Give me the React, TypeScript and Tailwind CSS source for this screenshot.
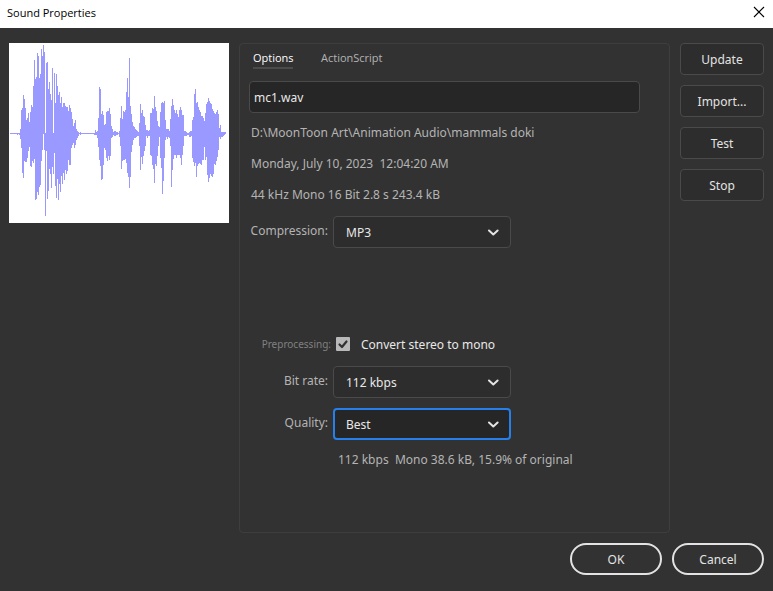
import { useState } from "react";
import type { ReactNode } from "react";

// Peak envelope of the clip, one [top, bottom] pair per column, silence at 279/282.
const LEAD_IN: number[][] = [
  [279, 282], [279, 282], [279, 282], [279, 282], [279, 282], [279, 282], [279, 282], [279, 285], [279, 282], [279, 285],
];
const PAUSE: number[][] = Array.from({ length: 13 }, () => [279, 282]);

const PEAKS: number[][] = [
  ...LEAD_IN,
  [267, 297], [210, 324], [204, 399], [165, 414], [177, 363], [204, 366], [240, 366], [234, 354], [219, 333], [246, 321],
  [216, 378], [195, 381], [201, 363], [138, 369], [60, 357], [117, 480], [111, 477], [39, 456], [48, 465], [114, 441],
  [102, 435], [27, 363], [48, 330], [15, 282], [36, 330], [279, 528], [69, 333], [66, 477], [147, 453], [126, 387],
  [162, 402], [180, 444], [84, 381], [279, 402], [99, 339], [189, 438], [102, 474], [138, 417], [165, 480], [156, 432],
  [189, 456], [171, 408], [201, 432], [189, 399], [189, 420], [198, 390], [201, 402], [201, 393], [213, 360], [195, 375],
  [204, 375], [216, 324], [237, 315], [258, 309], [249, 324], [240, 315], [267, 300], [273, 294], [276, 288], [279, 282],
  [276, 285],
  ...PAUSE,
  [279, 285], [270, 285], [276, 285], [273, 294], [234, 321], [141, 360],
  [147, 378], [222, 420], [213, 417], [225, 375], [255, 324], [252, 330], [216, 354], [213, 363], [213, 348], [204, 360],
  [222, 348], [258, 294], [267, 291], [276, 285], [273, 288], [273, 288], [276, 285], [276, 285], [279, 282], [273, 291],
  [234, 318], [198, 387], [237, 363], [213, 360], [216, 360], [210, 357], [156, 369], [114, 399], [171, 411], [54, 444],
  [198, 411], [222, 336], [246, 315], [258, 300], [261, 294], [267, 294], [270, 291], [273, 288], [276, 288], [249, 318],
  [192, 390], [219, 351], [210, 372], [228, 348], [231, 333], [255, 318], [270, 288], [270, 294], [273, 288], [270, 288],
  [219, 345], [219, 348], [204, 375], [207, 387], [168, 429], [201, 372], [213, 378], [243, 348], [258, 318], [261, 291],
  [216, 354], [189, 384], [186, 462], [189, 423], [183, 354], [240, 300], [267, 291], [267, 297], [267, 291], [273, 294],
  [237, 318], [198, 441], [177, 390], [195, 357], [210, 345], [219, 345], [210, 354], [222, 345], [231, 345], [210, 345],
  [201, 354], [210, 375], [225, 345], [225, 318], [273, 288], [273, 288], [276, 288], [279, 285], [279, 285], [276, 291],
  [273, 291], [273, 288], [240, 354], [231, 366], [162, 378], [147, 369], [189, 411], [186, 378], [201, 372], [210, 369],
  [216, 372], [228, 375], [228, 360], [234, 360], [243, 321], [219, 360], [192, 351], [186, 405], [174, 426], [183, 414],
  [189, 402], [192, 408], [207, 411], [213, 402], [219, 372], [222, 375], [216, 363], [210, 351], [222, 330], [264, 291],
  [255, 297], [276, 291], [276, 291], [276, 288], [276, 285], [276, 282],
];

function Waveform() {
  return (
    <svg
      viewBox="0 9 660 540"
      shapeRendering="crispEdges"
      role="img"
      aria-label="Waveform"
      className="w-[220px] shrink-0 self-start bg-white"
    >
      {PEAKS.map(([top, bottom], i) => (
        <rect key={i} x={3 + i * 3} y={top} width={3} height={bottom - top} fill="#9999ff" />
      ))}
    </svg>
  );
}

function SideButton({ children }: { children: ReactNode }) {
  return (
    <button className="h-8 rounded border border-[#4a4a4a] bg-[#2d2d2d] pt-0.5 text-[#e3e3e3]">
      {children}
    </button>
  );
}

function PillButton({ children }: { children: ReactNode }) {
  return (
    <button className="h-8 w-[92px] rounded-full border-2 border-[#e3e3e3] pt-0.5 text-[#e3e3e3]">
      {children}
    </button>
  );
}

type SelectRowProps = {
  id: string;
  label: string;
  options: string[];
  active?: boolean;
};

function SelectRow({ id, label, options, active = false }: SelectRowProps) {
  const [value, setValue] = useState(options[0]);
  const frame = active
    ? "border-2 border-[#2680eb] bg-[#262626] pl-[11px]"
    : "border border-[#4a4a4a] bg-[#2d2d2d] pl-3";
  return (
    <div className="flex gap-[5px]">
      <label htmlFor={id} className="w-[79px] shrink-0 whitespace-nowrap text-right leading-[30px]">
        {label}
      </label>
      <div className="relative w-[178px]">
        <select
          id={id}
          value={value}
          onChange={(e) => setValue(e.target.value)}
          className={`h-8 w-full appearance-none rounded pt-0.5 text-[#e8e8e8] outline-none ${frame}`}
        >
          {options.map((o) => (
            <option key={o}>{o}</option>
          ))}
        </select>
        <svg
          viewBox="0 0 12 8"
          className="pointer-events-none absolute right-3 top-3 h-2 w-3"
          fill="none"
          stroke="#e3e3e3"
          strokeWidth="2"
          strokeLinecap="round"
          strokeLinejoin="round"
        >
          <path d="M2 2.5 L6.3 6.5 L10.6 2.5" />
        </svg>
      </div>
    </div>
  );
}

export default function App() {
  const [name, setName] = useState("mc1.wav");
  const [mono, setMono] = useState(true);

  return (
    <div className="flex min-h-screen flex-col bg-[#323232] font-['Noto_Sans',sans-serif] text-[12px] text-[#b4b4b4]">
      <header className="flex h-7 items-center justify-between bg-white pl-[7px] pr-2 text-black">
        <h1 className="pb-0.5 font-['Open_Sans',sans-serif] text-[11px]">Sound Properties</h1>
        <button aria-label="Close" className="pb-1">
          <svg viewBox="0 0 12 12" className="h-3 w-3" stroke="#000" strokeWidth="1.1">
            <path d="M1 1 L11 11 M11 1 L1 11" />
          </svg>
        </button>
      </header>

      <main className="flex grow gap-2.5 px-[9px] pt-[15px]">
        <Waveform />

        <section className="min-w-0 grow rounded border border-[#3e3e3e] px-[9px]">
          <nav className="flex gap-7 px-1 pt-1.5 font-['Open_Sans',sans-serif] text-[11px]">
            <button className="h-[19px] w-10 whitespace-nowrap border-b-2 border-[#4b4b4b] text-left text-white">
              Options
            </button>
            <button className="h-[19px] whitespace-nowrap border-b-2 border-transparent">ActionScript</button>
          </nav>

          <input
            aria-label="Name"
            value={name}
            onChange={(e) => setName(e.target.value)}
            className="mt-3 h-8 w-[391px] max-w-full rounded border border-[#4a4a4a] bg-[#262626] px-1 text-[#e8e8e8] outline-none"
          />

          <div className="mt-1 whitespace-pre pl-0.5 leading-[31px]">
            <p>D:\MoonToon Art\Animation Audio\mammals doki</p>
            <p>Monday, July 10, 2023{"  "}12:04:20 AM</p>
            <p>44 kHz Mono 16 Bit 2.8 s 243.4 kB</p>
          </div>

          <div className="mt-1.5">
            <SelectRow id="compression" label="Compression:" options={["MP3", "Default", "ADPCM", "Raw", "Speech"]} />
          </div>

          <div className="mt-[86px] flex h-5 items-center">
            <span className="w-[82px] shrink-0 whitespace-nowrap text-right text-[10px] text-[#808080]">
              Preprocessing:
            </span>
            <div className="ml-[5px] flex items-center text-[#e8e8e8]">
              <span className="relative h-3.5 w-3.5">
                <input
                  id="mono"
                  type="checkbox"
                  checked={mono}
                  onChange={(e) => setMono(e.target.checked)}
                  className="peer block h-3.5 w-3.5 appearance-none rounded-[1px] bg-[#b9b9b9]"
                />
                <svg
                  viewBox="0 0 14 14"
                  className="pointer-events-none absolute inset-0 hidden h-3.5 w-3.5 peer-checked:block"
                  fill="none"
                  stroke="#323232"
                  strokeWidth="2.2"
                  strokeLinecap="round"
                  strokeLinejoin="round"
                >
                  <path d="M3.5 7.5 L6 10 L10.5 4.5" />
                </svg>
              </span>
              <label htmlFor="mono" className="pl-[11px] pt-0.5">
                Convert stereo to mono
              </label>
            </div>
          </div>

          <div className="mt-3 flex flex-col gap-2.5">
            <SelectRow id="bitrate" label="Bit rate:" options={["112 kbps", "64 kbps", "128 kbps", "160 kbps"]} />
            <SelectRow id="quality" label="Quality:" options={["Best", "Medium", "Fast"]} active />
          </div>

          <p className="mt-[11px] whitespace-pre pl-[89px]">112 kbps{"  "}Mono 38.6 kB, 15.9% of original</p>
        </section>

        <aside className="flex w-[84px] shrink-0 flex-col gap-2.5">
          <SideButton>Update</SideButton>
          <SideButton>Import...</SideButton>
          <SideButton>Test</SideButton>
          <SideButton>Stop</SideButton>
        </aside>
      </main>

      <footer className="flex justify-end gap-2.5 px-[9px] pb-4 pt-2.5">
        <PillButton>OK</PillButton>
        <PillButton>Cancel</PillButton>
      </footer>
    </div>
  );
}
